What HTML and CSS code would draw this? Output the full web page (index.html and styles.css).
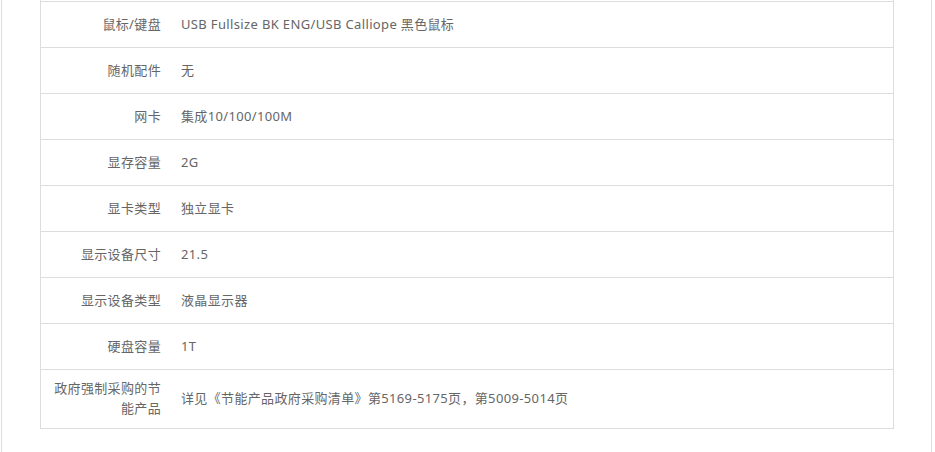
FILE: index.html
```html
<!doctype html>
<html lang="zh-CN">
<head>
  <meta charset="utf-8">
  <title>规格参数</title>
  <link rel="stylesheet" href="styles.css">
</head>
<body>

<div class="wrap">
  <table class="spec">
    <colgroup>
      <col class="c-name">
      <col>
    </colgroup>
    <tr><td class="name">鼠标/键盘</td><td>USB Fullsize BK ENG/USB Calliope 黑色鼠标</td></tr>
    <tr><td class="name">随机配件</td><td>无</td></tr>
    <tr><td class="name">网卡</td><td>集成10/100/100M</td></tr>
    <tr><td class="name">显存容量</td><td>2G</td></tr>
    <tr><td class="name">显卡类型</td><td>独立显卡</td></tr>
    <tr><td class="name">显示设备尺寸</td><td>21.5</td></tr>
    <tr><td class="name">显示设备类型</td><td>液晶显示器</td></tr>
    <tr><td class="name">硬盘容量</td><td>1T</td></tr>
    <tr><td class="name">政府强制采购的节能产品</td><td>详见《节能产品政府采购清单》第5169-5175页，第5009-5014页</td></tr>
  </table>
</div>

</body>
</html>
```

FILE: styles.css
```css
body { margin: 0; background: #fff; font: normal 13px "Noto Sans", "Noto Sans CJK SC", sans-serif; color: #666; letter-spacing: 0.35px; }

.wrap {
  width: 931px;
  height: 452px;
  margin-left: 1px;
  padding-left: 38px;
  box-sizing: border-box;
  border-left: 1px solid #ddd;
  border-right: 1px solid #ddd;
}

.spec {
  width: 854px;
  table-layout: fixed;
  border-collapse: separate;
  border-spacing: 0;
  border: 1px solid #ddd;
  border-top: 0;
  padding-top: 1px;
}
.spec .c-name { width: 130px; }
.spec td {
  height: 27px;
  padding: 8px 10px 10px;
  line-height: 20px;
  border-top: 1px solid #ddd;
  vertical-align: middle;
}
.spec td.name { text-align: right; }
```
